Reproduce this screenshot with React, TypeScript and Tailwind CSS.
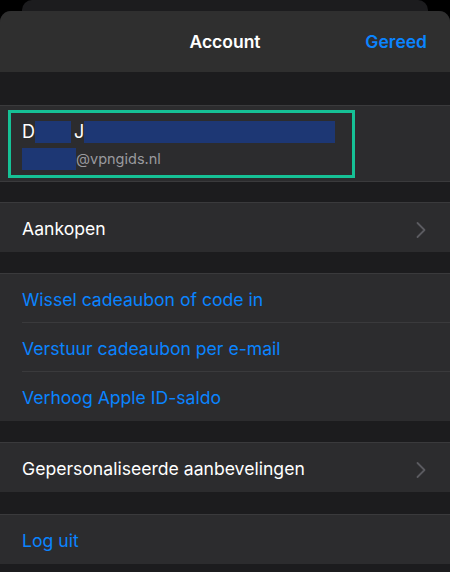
const font = { fontFamily: 'Inter, "Noto Sans", sans-serif' };

function Chevron() {
	return (
		<svg width="10" height="18" viewBox="0 0 10 18" className="shrink-0">
			<path d="M1.5 2l7 7-7 7" fill="none" stroke="#5b5b60" strokeWidth="1.8" strokeLinecap="round" strokeLinejoin="round" />
		</svg>
	);
}

function Gap({ h }: { h: string }) {
	return <div className={`${h} bg-[#1c1c1e] border-b border-[#3a3a3c]`} />;
}

function Row({ label, blue, chevron, sep }: { label: string; blue?: boolean; chevron?: boolean; sep?: boolean }) {
	return (
		<div className="flex h-[49px] items-center bg-[#2c2c2e] pl-[22px]">
			<div className={`flex h-full flex-1 items-center pr-6 pt-[4px] ${sep ? 'border-b border-[#3a3a3c]' : ''}`}>
				<span className={`flex-1 text-[17.6px] ${blue ? 'text-[#0a84ff]' : 'text-white'}`}>{label}</span>
				{chevron && <Chevron />}
			</div>
		</div>
	);
}

export default function App() {
	return (
		<div className="h-[572px] w-[450px] overflow-hidden bg-black" style={font}>
			<div className="mx-[22px] h-[11px] rounded-t-[10px] bg-[#1c1c1e]" />
			<div className="overflow-hidden rounded-t-[11px] bg-[#1c1c1e]">
				<div className="relative flex h-[61px] items-center justify-center bg-[#2f2f2f] pt-[2px]">
					<span className="text-[17.5px] font-semibold text-white">Account</span>
					<span className="absolute right-[23px] text-[17.5px] font-semibold text-[#0a84ff]">Gereed</span>
				</div>
				<Gap h="h-[34px]" />
				<div className="flex h-[76px] items-center bg-[#2c2c2e] px-2 border-b border-[#3a3a3c]">
					<div className="flex h-[68px] w-[347px] flex-col justify-center gap-[3px] border-[3px] border-[#16c196] pl-[11px] pt-[1px]">
						<div className="flex items-center text-[18px] text-white">
							<span>D</span>
							<span className="h-[22px] w-[36px] bg-[#1d3774]" />
							<span className="ml-[3px]">J</span>
							<span className="h-[22px] w-[251px] bg-[#1d3774]" />
						</div>
						<div className="flex items-center text-[14.5px] text-[#9a9a9e]">
							<span className="h-[22px] w-[54px] bg-[#1d3774]" />
							<span>@vpngids.nl</span>
						</div>
					</div>
				</div>
				<Gap h="h-[21px]" />
				<Row label="Aankopen" chevron />
				<Gap h="h-[22px]" />
				<Row label="Wissel cadeaubon of code in" blue sep />
				<Row label="Verstuur cadeaubon per e-mail" blue sep />
				<Row label="Verhoog Apple ID-saldo" blue />
				<Gap h="h-[22px]" />
				<Row label="Gepersonaliseerde aanbevelingen" chevron />
				<Gap h="h-[23px]" />
				<Row label="Log uit" blue />
				<Gap h="h-[20px]" />
			</div>
		</div>
	);
}
